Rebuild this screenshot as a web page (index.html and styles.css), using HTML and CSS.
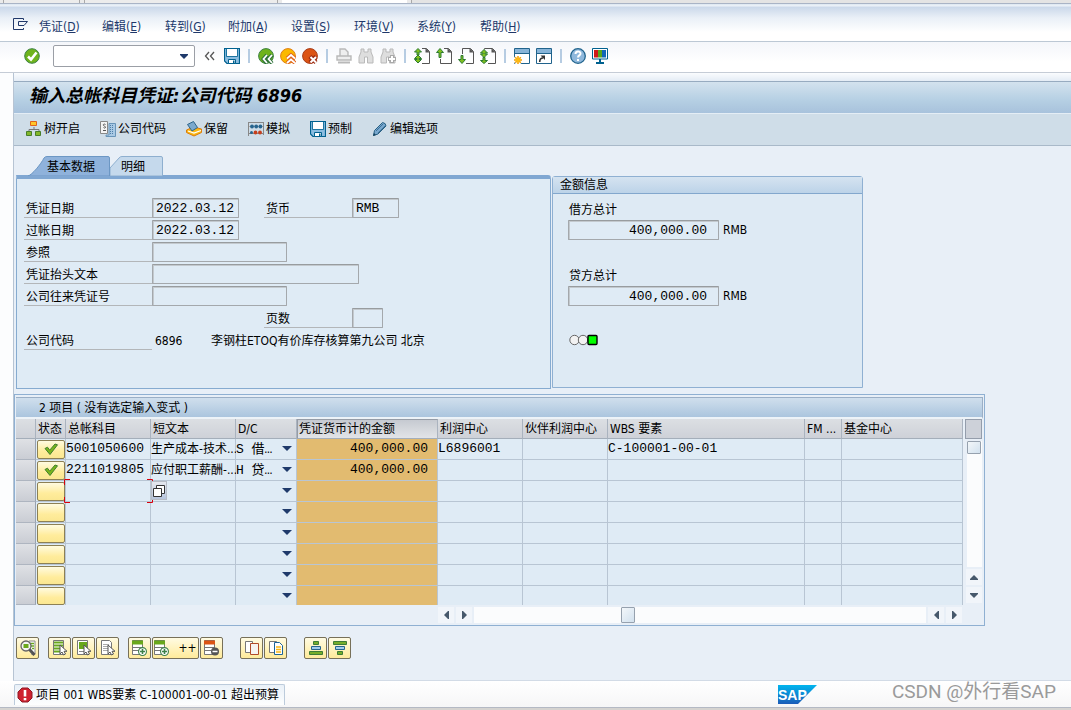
FILE: index.html
```html
<!DOCTYPE html>
<html lang="zh-CN">
<head>
<meta charset="utf-8">
<title>输入总帐科目凭证</title>
<link rel="stylesheet" href="styles.css">
</head>
<body>
<svg class="defs" width="0" height="0" aria-hidden="true">
  <defs>
    <symbol id="save" viewBox="0 0 16 16"><path d="M.5.500h15v15H3L.5 13z" fill="#8bbde0" stroke="#00618f" stroke-width="1.200"/><path d="M3 1h10v7H3z" fill="#fff"/><path d="M2.500 1v7.500h11V1" fill="none" stroke="#00618f" stroke-width=".8"/><path d="M4.500 11.500h7v4h-7z" fill="#fff" stroke="#00618f"/><path d="M9 12.500h1.500V15H9z" fill="#00618f"/></symbol>
    <symbol id="tick" viewBox="0 0 16 16"><path d="M2 7.500l2.500-1.300 2.200 3L12 3l2.500.8L7 13.500z" fill="#79b51c" stroke="#3f7f2d"/></symbol>
    <symbol id="cursor" viewBox="0 0 9 12"><path d="M1 1v9l2-2 1.500 3 2-1-1.500-2.700H8z" fill="#fff" stroke="#555"/></symbol>
    <symbol id="plus" viewBox="0 0 8 8"><circle cx="4" cy="4" r="3.500" fill="#fff" stroke="#3c8048"/><path d="M4 1.800v4.400M1.800 4h4.400" stroke="#3c8048" stroke-width="1.400"/></symbol>
  </defs>
</svg>
<div class="window">
  <div class="browser-tabs"><span class="btab btab-a"></span><span class="btab btab-b"></span><span class="btab btab-c"></span><span class="btab btab-d"></span></div>
  <nav class="menubar">
    <button class="menu-icon" aria-label="菜单"><svg width="16" height="12" viewBox="0 0 16 12"><path d="M10.500 2V.5H.5v11h10V10M5.500 3.500h9L11 7.500H5.500z" fill="none" stroke="#20386a"/></svg></button>
    <button class="menu">凭证(<u>D</u>)</button><button class="menu">编辑(<u>E</u>)</button><button class="menu">转到(<u>G</u>)</button><button class="menu">附加(<u>A</u>)</button><button class="menu">设置(<u>S</u>)</button><button class="menu">环境(<u>V</u>)</button><button class="menu">系统(<u>Y</u>)</button><button class="menu">帮助(<u>H</u>)</button>
  </nav>
  <div class="toolbar">
    <button class="icon enter" aria-label="回车"><svg viewBox="0 0 16 16"><circle cx="8" cy="8" r="7.300" fill="#6fb31c" stroke="#3c8244"/><path d="M4 8.500l3 3 5.500-7" fill="none" stroke="#fff" stroke-width="2.600"/></svg></button>
    <div class="command"><input aria-label="命令"><button aria-label="历史记录"><svg width="8" height="5" viewBox="0 0 8 5"><path d="M0 0h8v1L4 5 0 1z" fill="#1f3a6b"/></svg></button></div>
    <button class="icon" aria-label="折叠"><svg viewBox="0 0 16 16"><path d="M7 4L3.500 8 7 12M12 4L8.500 8l3.500 4" fill="none" stroke="#555" stroke-width="1.300"/></svg></button>
    <button class="icon" aria-label="保存"><svg><use href="#save"/></svg></button>
    <span class="sep"></span>
    <button class="icon" aria-label="返回"><svg viewBox="0 0 16 16"><circle cx="8" cy="8" r="7.400" fill="#6fb31c" stroke="#3c8244"/><path d="M9 7l-3.500 4L9 15.500M14 7l-3.500 4 3.500 4.500" fill="none" stroke="#2d7138" stroke-width="3.800"/><path d="M9 7l-3.500 4L9 15M14 7l-3.500 4 3.500 4" fill="none" stroke="#fff" stroke-width="1.800"/></svg></button>
    <button class="icon" aria-label="退出"><svg viewBox="0 0 16 16"><circle cx="8" cy="8" r="7.400" fill="#fbb900" stroke="#e07e14"/><path d="M7 10.500L11 7l4 3.500M7 15l4-3.500 4 3.500" fill="none" stroke="#e0641c" stroke-width="3.800"/><path d="M7 10.500L11 7l4 3.500M7 15l4-3.500 4 3.500" fill="none" stroke="#fff" stroke-width="1.700"/></svg></button>
    <button class="icon" aria-label="取消"><svg viewBox="0 0 16 16"><circle cx="8" cy="8" r="7.400" fill="#dc5414" stroke="#a83c18"/><path d="M8 8.500l6 6M14 8.500l-6 6" stroke="#9b2b12" stroke-width="4.200"/><path d="M8.500 9l5.500 5.500M14 9l-5.500 5.500" stroke="#fff" stroke-width="2"/></svg></button>
    <span class="sep"></span>
    <button class="icon" aria-label="打印"><svg viewBox="0 0 16 16"><path d="M4 8V1h5l3 3v4M1 8h14v4H1z" fill="#eee" stroke="#b9b9b9" stroke-width="1.400"/><path d="M2 14.500h12" stroke="#b9b9b9" stroke-width="2"/></svg></button>
    <button class="icon" aria-label="查找"><svg viewBox="0 0 16 16"><path d="M3 1h3v3h4V1h3v3l2 5v6H9.500V9h-3v6H1V9l2-5z" fill="#dedede" stroke="#b9b9b9"/></svg></button>
    <button class="icon" aria-label="查找下一个"><svg viewBox="0 0 16 16"><path d="M3 1h3v3h4V1h3v3l2 5v6H9.500V9h-3v6H1V9l2-5z" fill="#dedede" stroke="#b9b9b9"/><path d="M12 7v8M8 11h8" stroke="#aaa" stroke-width="4"/><path d="M12 8v6M9 11h6" stroke="#fff" stroke-width="2"/></svg></button>
    <span class="sep"></span>
    <button class="icon" aria-label="首页"><svg viewBox="0 0 16 16"><path d="M8 .5h4.500l3 3v12H8" fill="none" stroke="#555"/><path d="M11.500 0L16 4.500h-4.500z" fill="#555"/><path d="M4 .5L7.500 4H5v3H3V4H.5zM4 7l3.500 3.500H5v1h2.500L4 15 .5 11.500H3v-1H.5z" fill="#7fc01e" stroke="#2c7a33"/></svg></button>
    <button class="icon" aria-label="上一页"><svg viewBox="0 0 16 16"><path d="M8 .5h4.500l3 3v12h-11V11" fill="none" stroke="#555"/><path d="M11.500 0L16 4.500h-4.500z" fill="#555"/><path d="M4 .5L7.500 4.500H5v5H3v-5H.5z" fill="#7fc01e" stroke="#2c7a33"/></svg></button>
    <button class="icon" aria-label="下一页"><svg viewBox="0 0 16 16"><path d="M4.500 6V.5h8l3 3v12H8" fill="none" stroke="#555"/><path d="M11.500 0L16 4.500h-4.500z" fill="#555"/><path d="M4 15.500L.5 11.500H3v-4h2v4h2.500z" fill="#7fc01e" stroke="#2c7a33"/></svg></button>
    <button class="icon" aria-label="末页"><svg viewBox="0 0 16 16"><path d="M4.500 1.500v-1h8l3 3v12H8" fill="none" stroke="#555"/><path d="M11.500 0L16 4.500h-4.500z" fill="#555"/><path d="M4 1.500L7.500 5H5v1h2.500L4 9.500.5 6H3V5H.5zM4 15.500L.5 12.500H3v-3h2v3h2.500z" fill="#7fc01e" stroke="#2c7a33"/></svg></button>
    <span class="sep"></span>
    <button class="icon" aria-label="新建会话"><svg viewBox="0 0 16 16"><path d="M.5.500h15v15H.5z" fill="#fff" stroke="#20638c"/><path d="M1 1h14v4H1z" fill="#87b4d8"/><path d="M1 5.500h14" stroke="#20638c"/><circle cx="4" cy="12" r="4.500" fill="#fff"/><path d="M4 8v8M0 12h8M1.200 9.200l5.600 5.600M6.800 9.200l-5.600 5.600" stroke="#f5a000" stroke-width="1.500"/><circle cx="4" cy="12" r="2.300" fill="#fdbb13"/></svg></button>
    <button class="icon" aria-label="快捷方式"><svg viewBox="0 0 16 16"><path d="M.5.500h15v15H.5z" fill="#fff" stroke="#20638c"/><path d="M1 1h14v4H1z" fill="#87b4d8"/><path d="M1 5.500h14" stroke="#20638c"/><path d="M3.700 14c0-3 1-4 3.300-4" fill="none" stroke="#333" stroke-width="1.600"/><path d="M4.500 7.500H9V12z" fill="#333"/></svg></button>
    <span class="sep"></span>
    <button class="icon" aria-label="帮助"><svg viewBox="0 0 16 16"><circle cx="8" cy="8" r="7.300" fill="#8fb8dc" stroke="#20638c" stroke-width="1.300"/><path d="M5.500 6c0-3.300 5-3.300 5-.5 0 2-2.500 1.800-2.500 4" fill="none" stroke="#fff" stroke-width="2"/><path d="M7 11h2v2H7z" fill="#fff"/></svg></button>
    <button class="icon" aria-label="布局"><svg viewBox="0 0 16 16"><path d="M.5.500h15v10.500H.5z" fill="#fff" stroke="#00618f"/><path d="M2 2h4v7.500H2z" fill="#d01818"/><path d="M6 2h4v7.500H6z" fill="#59a51c"/><path d="M10 2h4v7.500h-4z" fill="#1266b8"/><path d="M8 11v3M4 15h8" stroke="#00618f" stroke-width="2"/></svg></button>
  </div>

  <main class="main">
    <h1 class="title">输入总帐科目凭证:公司代码 6896</h1>
    <div class="app-toolbar">
      <button><svg class="i" viewBox="0 0 16 16"><path d="M8 6v3M3 11V8.500h10V11" fill="none" stroke="#777"/><path d="M4.500.500h6v4h-6z" fill="#ffc629" stroke="#e0641c"/><path d="M.5 10.500h5v4h-5zM9.500 10.500h5v4h-5z" fill="#83b72a" stroke="#477e2a"/></svg>树开启</button>
      <button><svg class="i" viewBox="0 0 16 16"><path d="M.5.500h7v12h-7z" fill="#f4f4f4" stroke="#888"/><path d="M5.500 3.500c-1-1-3 0-2 1s2.500 1 2 2-1.500.5-2 0M3 9.500h3" fill="none" stroke="#555"/><path d="M9 2.500h6.500v13H6V14h3z" fill="#a9c9e4" stroke="#6894b8"/><path d="M10.500 4v10M12.500 4v10" stroke="#4d7ea8" stroke-dasharray="1 1"/></svg>公司代码</button>
      <button><svg class="i" viewBox="0 0 16 16"><path d="M.5 9l7-3 8 2v3.500L8 15l-7.500-3.500z" fill="#fbb913" stroke="#db7a0c"/><path d="M2 10l6 2 7-2.500" fill="none" stroke="#fff" stroke-width="1.200"/><path d="M1.500 3.500L7.500.500l4 6L6 10z" fill="#7ba9cd" stroke="#2d648b"/></svg>保留</button>
      <button><svg class="i" viewBox="0 0 16 16"><path d="M.5 15V1M15.500 1v13M0 1.500h16M1 12.500h14" fill="none" stroke="#888"/><path d="M1 5.500h14" stroke="#aaa"/><g fill="#27658f"><circle cx="4" cy="5.500" r="1.900"/><circle cx="8.200" cy="5.500" r="1.900"/><circle cx="12.400" cy="5.500" r="1.900"/></g><g fill="#c63f1d"><circle cx="7.500" cy="11.500" r="1.900"/><circle cx="12" cy="11.500" r="1.900"/></g><circle cx="3.500" cy="11.500" r="1.500" fill="#27658f"/></svg>模拟</button>
      <button><svg class="i"><use href="#save"/></svg>预制</button>
      <button><svg class="i" viewBox="0 0 16 16"><path d="M1.500 14.500l1-5 8-8q3.500.5 3.500 3.500l-8 8z" fill="#78a7ce" stroke="#286083"/><path d="M4 10L11 3M6 12l7-7" stroke="#3c7198"/><path d="M1 15l1-3 2 2z" fill="#16435e"/></svg>编辑选项</button>
    </div>

    <div class="content">
      <div class="panels">
        <section class="basic">
          <div class="tabs" role="tablist">
            <button role="tab" aria-selected="true" class="tab tab-on"><svg viewBox="0 0 82 20" preserveAspectRatio="none"><path d="M0 20C4 19 13 8 16 2q1-1.500 3-1.500h61q1.500 0 1.500 1.500v18z" fill="#8fb2db" stroke="#6c97c4"/></svg><span>基本数据</span></button>
            <button role="tab" aria-selected="false" class="tab tab-off"><svg viewBox="0 0 53 20" preserveAspectRatio="none"><path d="M0 20v-8L9 2q1-1.500 3-1.500h39q1.500 0 1.500 1.500v18z" fill="#c5d9ec" stroke="#8eafcf"/></svg><span>明细</span></button>
          </div>
          <div class="form">
            <label class="c1" for="d1">凭证日期</label><input class="c2 w-date" id="d1" value="2022.03.12"><label class="c4" for="cur">货币</label><input class="c5 w-cur" id="cur" value="RMB">
            <label class="c1" for="d2">过帐日期</label><input class="c2 w-date" id="d2" value="2022.03.12">
            <label class="c1" for="ref">参照</label><input class="c2 w-ref" id="ref">
            <label class="c1" for="txt">凭证抬头文本</label><input class="c2 w-text" id="txt">
            <label class="c1" for="ico">公司往来凭证号</label><input class="c2 w-ref" id="ico">
            <label class="c4 r6" for="pages">页数</label><input class="c5 r6 w-page" id="pages">
            <span class="c1 r7 lbl">公司代码</span><output class="c2 r7 out">6896</output><output class="c3 r7 out">李钢柱ETOQ有价库存核算第九公司 北京</output>
          </div>
        </section>
        <section class="amounts">
          <h2>金额信息</h2>
          <div class="amount-body">
            <label for="dr">借方总计</label>
            <div class="amount"><input id="dr" value="400,000.00" readonly><span>RMB</span></div>
            <label for="cr">贷方总计</label>
            <div class="amount"><input id="cr" value="400,000.00" readonly><span>RMB</span></div>
            <svg class="lights" width="29" height="12" viewBox="0 0 29 12"><circle cx="5.500" cy="6" r="4.700" fill="#f2f2f2" stroke="#666"/><circle cx="14" cy="6" r="4.700" fill="#f2f2f2" stroke="#666"/><rect x="19" y="1.500" width="9" height="9" rx="1" fill="#0f0" stroke="#000" stroke-width="1.400"/></svg>
          </div>
        </section>
      </div>

      <section class="items">
        <h2>2 项目 ( 没有选定输入变式 )</h2>
        <div class="grid-area">
          <div class="grid-box">
          <table class="grid">
            <colgroup><col class="k-sel"><col class="k-st"><col class="k-a"><col class="k-a"><col class="k-dc"><col class="k-amt"><col class="k-a"><col class="k-a"><col class="k-wbs"><col class="k-fm"><col class="k-fund"></colgroup>
            <thead><tr><th></th><th>状态</th><th>总帐科目</th><th>短文本</th><th>D/C</th><th class="sorted">凭证货币计的金额</th><th>利润中心</th><th>伙伴利润中心</th><th>WBS 要素</th><th>FM ...</th><th>基金中心</th></tr></thead>
            <tbody>
              <tr><td class="sel"></td><td class="st"><button aria-label="正常"><svg width="18" height="16"><use href="#tick"/></svg></button></td><td class="m">5001050600</td><td class="short">生产成本-技术...</td><td class="dc"><select aria-label="借贷"><option>S 借…</option></select></td><td class="amt">400,000.00</td><td class="m">L6896001</td><td></td><td class="m">C-100001-00-01</td><td></td><td></td></tr>
              <tr><td class="sel"></td><td class="st"><button aria-label="正常"><svg width="18" height="16"><use href="#tick"/></svg></button></td><td class="m">2211019805</td><td class="short">应付职工薪酬-...</td><td class="dc"><select aria-label="借贷"><option>H 贷…</option></select></td><td class="amt">400,000.00</td><td></td><td></td><td></td><td></td><td></td></tr>
              <tr><td class="sel"></td><td class="st"><button aria-label="状态"></button></td><td class="focus"><svg class="corners" width="89" height="24" viewBox="0 0 89 24"><path d="M6 .5H.5V6M83 .5h5.500V6M6 23.500H.5V18M83 23.500h5.500V18" fill="none" stroke="#d8000c"/></svg><button class="f4" aria-label="搜索帮助"><svg width="12" height="12" viewBox="0 0 12 12"><path d="M3.500 3V.5h8v8H9" fill="#fff" stroke="#333"/><path d="M.5 3.500h8v8h-8z" fill="#fff" stroke="#333"/></svg></button></td><td></td><td class="dc"><select aria-label="借贷"><option></option></select></td><td class="amt"></td><td></td><td></td><td></td><td></td><td></td></tr>
              <tr><td class="sel"></td><td class="st"><button aria-label="状态"></button></td><td></td><td></td><td class="dc"><select aria-label="借贷"><option></option></select></td><td class="amt"></td><td></td><td></td><td></td><td></td><td></td></tr>
              <tr><td class="sel"></td><td class="st"><button aria-label="状态"></button></td><td></td><td></td><td class="dc"><select aria-label="借贷"><option></option></select></td><td class="amt"></td><td></td><td></td><td></td><td></td><td></td></tr>
              <tr><td class="sel"></td><td class="st"><button aria-label="状态"></button></td><td></td><td></td><td class="dc"><select aria-label="借贷"><option></option></select></td><td class="amt"></td><td></td><td></td><td></td><td></td><td></td></tr>
              <tr><td class="sel"></td><td class="st"><button aria-label="状态"></button></td><td></td><td></td><td class="dc"><select aria-label="借贷"><option></option></select></td><td class="amt"></td><td></td><td></td><td></td><td></td><td></td></tr>
              <tr class="last"><td class="sel"></td><td class="st"><button aria-label="状态"></button></td><td></td><td></td><td class="dc"><select aria-label="借贷"><option></option></select></td><td class="amt"></td><td></td><td></td><td></td><td></td><td></td></tr>
            </tbody>
          </table>
          </div>
          <div class="vscroll">
            <button class="config" aria-label="配置"></button>
            <div class="vtrack"><div class="thumb"></div></div>
            <button class="arrow" aria-label="上"><svg width="8" height="5" viewBox="0 0 8 5"><path d="M0 5V4l4-4 4 4v1z"/></svg></button>
            <button class="arrow" aria-label="下"><svg width="8" height="5" viewBox="0 0 8 5"><path d="M0 0v1l4 4 4-4V0z"/></svg></button>
          </div>
        </div>
        <div class="hscroll">
          <button class="arrow" aria-label="左"><svg width="5" height="8" viewBox="0 0 5 8"><path d="M5 0H4L0 4l4 4h1z"/></svg></button>
          <button class="arrow" aria-label="右"><svg width="5" height="8" viewBox="0 0 5 8"><path d="M0 0h1l4 4-4 4H0z"/></svg></button>
          <div class="htrack"><div class="thumb"></div></div>
          <button class="arrow" aria-label="左"><svg width="5" height="8" viewBox="0 0 5 8"><path d="M5 0H4L0 4l4 4h1z"/></svg></button>
          <button class="arrow" aria-label="右"><svg width="5" height="8" viewBox="0 0 5 8"><path d="M0 0h1l4 4-4 4H0z"/></svg></button>
        </div>
      </section>

      <div class="actions">
        <div class="group"><button aria-label="明细"><svg viewBox="0 0 16 16"><path d="M9 1h6v13h-4" fill="#fff" stroke="#888"/><path d="M9 3.500h5M11 6h3M12 8.500h2" stroke="#69a81c" stroke-width="1.500"/><circle cx="6" cy="6" r="5" fill="#f4f4f4" stroke="#666" stroke-width="1.300"/><path d="M3.500 4h5v4h-5z" fill="#69a81c"/><path d="M9.500 9.500l5 5.500" stroke="#555" stroke-width="3"/></svg></button></div>
        <div class="group"><button aria-label="全选"><svg viewBox="0 0 16 16"><path d="M1.500.500h10v14h-10z" fill="#fff" stroke="#777"/><path d="M2 2.500h9M2 5.500h9M2 8.500h6M2 11.500h6" stroke="#69a81c" stroke-width="2"/><use href="#cursor" x="7" y="4" width="9" height="12"/></svg></button><button aria-label="选择块"><svg viewBox="0 0 16 16"><path d="M1.500.500h10v14h-10z" fill="#fff" stroke="#777"/><path d="M3 2h8v7H3z" fill="#69a81c"/><path d="M3 11.500h6" stroke="#888"/><use href="#cursor" x="7" y="4" width="9" height="12"/></svg></button><button aria-label="取消全选"><svg viewBox="0 0 16 16"><path d="M1.500.500h8l2 2v12h-10z" fill="#fff" stroke="#777"/><path d="M3 4.500h6M3 6.500h6M3 8.500h5M3 10.500h5" stroke="#aaa"/><use href="#cursor" x="7" y="4" width="9" height="12"/></svg></button></div>
        <div class="group wide"><button aria-label="插入行"><svg viewBox="0 0 16 16"><path d="M.5.500h10v14H.5z" fill="#fff" stroke="#777"/><path d="M0 2.500h11" stroke="#69a81c" stroke-width="4"/><path d="M1 7.500h10M1 10.500h6" stroke="#777"/><use href="#plus" x="6" y="7" width="9" height="9"/></svg></button><button class="double" aria-label="插入多行"><svg viewBox="0 0 16 16"><path d="M.5.500h10v14H.5z" fill="#fff" stroke="#777"/><path d="M0 2.500h11" stroke="#69a81c" stroke-width="4"/><path d="M1 7.500h10M1 10.500h6" stroke="#777"/><use href="#plus" x="6" y="7" width="9" height="9"/></svg><span>++</span></button><button aria-label="删除行"><svg viewBox="0 0 16 16"><path d="M.5.500h10v14H.5z" fill="#fff" stroke="#777"/><path d="M0 2.500h11" stroke="#dc5414" stroke-width="4"/><path d="M1 7.500h10M1 10.500h6" stroke="#777"/><circle cx="11" cy="11.500" r="4" fill="#555"/><path d="M8.500 11.500h5" stroke="#fff" stroke-width="1.500"/></svg></button></div>
        <div class="group wide"><button aria-label="复制"><svg viewBox="0 0 16 16"><path d="M1.500 1.500h7v11h-7z" fill="#fff" stroke="#777"/><path d="M6.500 3.500h8v11h-8z" fill="#f6f3f0" stroke="#b14a28"/></svg></button><button aria-label="粘贴"><svg viewBox="0 0 16 16"><path d="M1.500 1.500h7v11h-7z" fill="#fff" stroke="#777"/><path d="M6.500 2.500h5l3 3v9h-8z" fill="#fff" stroke="#1c6498"/><path d="M8 7h5M8 9.500h5M8 12h5" stroke="#fbb913" stroke-width="1.500"/></svg></button></div>
        <div class="group"><button aria-label="升序"><svg viewBox="0 0 16 16"><path d="M5.500 1.500h5v3h-5zM1.500 11.500h13v3h-13z" fill="#75ad29" stroke="#3d7c37"/><path d="M3.500 6.500h9v3h-9z" fill="#a2cbed" stroke="#27658f"/></svg></button><button aria-label="降序"><svg viewBox="0 0 16 16"><path d="M1.500 1.500h13v3h-13zM5.500 11.500h5v3h-5z" fill="#75ad29" stroke="#3d7c37"/><path d="M3.500 6.500h9v3h-9z" fill="#a2cbed" stroke="#27658f"/></svg></button></div>
      </div>
    </div>
  </main>

  <footer class="status">
    <div class="message" role="status"><svg class="i" viewBox="0 0 16 16"><path d="M5 1h6l4 4v6l-4 4H5l-4-4V5z" fill="#cf2230" stroke="#8e1b27"/><path d="M8 3v6.500" stroke="#fff" stroke-width="2.600"/><path d="M6.700 11h2.600v2.300H6.700z" fill="#fff"/></svg><span>项目 001 WBS要素 C-100001-00-01 超出预算</span></div>
    <svg class="sap" width="39" height="19" viewBox="0 0 39 19"><defs><linearGradient id="sg" x2="0" y2="1"><stop stop-color="#00b5ee"/><stop offset="1" stop-color="#1c5cb8"/></linearGradient></defs><path d="M0 0h39L20 19H0z" fill="url(#sg)"/><text x="0" y="15" class="sap-text">SAP</text></svg>
    <div class="watermark">CSDN @外行看SAP</div>
  </footer>
</div>
</body>
</html>
```
FILE: styles.css
```css
* { box-sizing: border-box; }
body {
  margin: 0;
  background: #d9d9dc;
  color: #000;
  font: 12px/16px "DejaVu Sans Condensed", "Noto Sans CJK SC", sans-serif;
}
button, input, select { font: inherit; color: inherit; margin: 0; padding: 0; }
button { border: 0; background: none; }
h1, h2 { margin: 0; font-weight: normal; }
.defs { position: absolute; }
.window { min-height: 100vh; display: flex; flex-direction: column; background: #fcfdfe; border-bottom: 2px solid #d5d3d0; }

.browser-tabs { display: flex; gap: 4px; height: 4px; background: #eaeaea; border-bottom: 1px solid #a9b4c6; padding-left: 3px; }
.btab { border: solid #a9a9a9; border-width: 0 1px; background: #ececec; }
.btab-a { width: 77px; }
.btab-b { width: 194px; }
.btab-c { width: 125px; border: 0; background: #fff; }
.btab-d { flex: 1; background: #e4e4e4; border-right: 0; }

.menubar {
  display: flex; align-items: center; height: 38px; padding: 8px 0 0 13px;
  background: linear-gradient(#dce7f2 0, #eef3f9 2px, #cad8ea 3px, #eaf0f7 14px, #fff 28px);
  border-bottom: 1px solid #bcc8d4; color: #20386a;
}
.menu-icon { width: 26px; height: 18px; text-align: left; display: flex; }
.menu { width: 63px; text-align: left; white-space: nowrap; }

.toolbar {
  display: flex; align-items: center; gap: 6px; height: 31px; padding: 0 0 2px 24px;
  background: linear-gradient(#f4f6fa, #fff 20px); border-bottom: 1px solid #c5ccd6;
}
.icon, .icon svg, .i { display: block; width: 16px; height: 16px; flex: none; }
.enter { margin-right: 7px; }
.command { display: flex; width: 142px; height: 22px; border: 1px solid #9b9fa6; border-radius: 2px; background: #fff; margin-right: 1px; }
.command input { flex: 1; min-width: 0; border: 0; background: none; }
.command button { width: 21px; display: flex; align-items: center; justify-content: center; }
.sep { width: 6px; height: 14px; background: linear-gradient(#b6cce2, #b6cce2) center / 2px 100% no-repeat; }

.main {
  flex: 1; margin-left: 13px; padding-top: 8px;
  background: linear-gradient(#fafcfe, #e4ecf5 8px, #e8eff7 9px);
  border-left: 1px solid #b7c4d3; border-bottom: 1px solid #d2dbe6;
}
.title {
  height: 32px; padding-left: 15px; border-top: 1px solid #97abc0;
  background: linear-gradient(#d3e2ee, #b5cfe3 60%, #a8c2dc);
  font-size: 18px; line-height: 27px; font-weight: bold; font-style: italic; white-space: nowrap;
}
.app-toolbar { display: flex; gap: 20px; height: 33px; padding: 0 12px 1px; background: #cfdde8; border-top: 1px solid #e4edf5; border-bottom: 1px solid #a9b9c9; }
.app-toolbar button { display: flex; align-items: center; gap: 2px; white-space: nowrap; }
.content { padding: 10px 0 0; }

.panels { display: flex; align-items: flex-end; gap: 1px; padding-left: 2px; }
.basic { flex: 0 1 535px; }
.tabs { display: flex; padding-left: 12px; height: 19px; }
.tab { position: relative; height: 20px; text-align: left; }
.tab svg { position: absolute; inset: 0; width: 100%; height: 100%; }
.tab span { position: relative; }
.tab-on { width: 82px; padding: 2px 0 0 19px; }
.tab-off { width: 53px; padding: 2px 0 0 11px; }
.form {
  display: grid; grid-template-columns: 128px 56px 56px 88px 1fr; grid-auto-rows: 22px; align-items: start;
  height: 214px; padding: 19px 7px 0; background: #dfebf5; border: 1px solid #86abd0; border-top: 4px solid #80a7d2; border-top-right-radius: 3px;
}
.form label, .lbl { height: 20px; line-height: 22px; padding-left: 2px; border-bottom: 1px solid #b3b6b9; }
.form > * { white-space: nowrap; }
.c1 { grid-column: 1; }
.c2 { grid-column: 2; }
.c3 { grid-column: 3; }
.c4 { grid-column: 4; }
.c5 { grid-column: 5; }
.r6 { grid-row: 6; }
.r7 { grid-row: 7; }
.out { line-height: 22px; padding-left: 3px; }
.form input, .amount input {
  height: 20px; border: 1px solid #a4a8ac; border-top-color: #989c9f; box-shadow: inset 1px 1px #c3c9ce; border-radius: 1px; background: #dfebf5;
  padding: 0 3px; font: 13px/18px "Liberation Mono", "Noto Sans CJK SC", monospace;
}
.w-date { width: 87px; }
.w-cur { width: 47px; }
.w-ref { width: 135px; }
.w-text { width: 207px; }
.w-page { width: 31px; }

.amounts { flex: 0 1 311px; height: 212px; margin-bottom: 1px; background: #deeaf4; border: 1px solid #8fb0d2; border-radius: 3px 3px 0 0; }
.amounts h2 { height: 17px; padding-left: 7px; font-size: 12px; line-height: 17px; background: linear-gradient(#d5e3f0, #bcd3e8); border-bottom: 1px solid #82a7cd; }
.amount-body { display: flex; flex-direction: column; padding: 6px 15px 0; }
.amount-body label { height: 20px; line-height: 20px; padding-left: 1px; }
.amount { display: flex; gap: 4px; height: 20px; margin-bottom: 26px; line-height: 21px; }
.amount input { width: 151px; padding-right: 11px; text-align: right; }
.lights { margin: 2px 0 0 1px; }

.items { max-width: 971px; margin-top: 5px; padding: 2px 1px 0; border: 1px solid #8fb0d2; }
.items h2 { height: 22px; padding-left: 23px; font-size: 12px; line-height: 20px; background: linear-gradient(#d0dfed, #abc5de); border: 1px solid #9bafc6; border-width: 1px 1px 0 0; border-bottom: 2px solid #edf3f8; }
.grid-area { display: flex; }
.grid-box { flex: 1; min-width: 0; }
.grid { width: 100%; table-layout: fixed; border-collapse: separate; border-spacing: 0; }
.k-sel { width: 20px; }
.k-st { width: 30px; }
.k-a { width: 85px; }
.k-dc { width: 61px; }
.k-amt { width: 141px; }
.k-wbs { width: 197px; }
.k-fm { width: 37px; }
.k-fund { width: auto; }
.grid th { height: 20px; padding: 0 0 0 2px; font-weight: normal; text-align: left; line-height: 18px; white-space: nowrap; background: linear-gradient(#dcdfe3, #ced1d8); border-right: 1px solid #aab3bf; border-bottom: 1px solid #a4aeba; }
.grid th.sorted { background: linear-gradient(#c6cad1, #e2e4e7); border-left: 1px solid #969ca6; border-top: 1px solid #969ca6; padding-left: 1px; }
.grid td { position: relative; height: 21px; padding: 0; line-height: 18px; white-space: nowrap; background: #dfebf5; border-right: 1px solid #b8c5d3; border-bottom: 1px solid #b8c5d3; }
.grid .last td { height: 19px; border-bottom: 0; }
.grid td.sel { background: linear-gradient(#dfe1e5, #cacdd4); border-right: 1px solid #98a2b0; border-bottom: 1px solid #aeb5c0; }
.grid td.st { padding: 0 1px; }
.st button { display: flex; align-items: center; justify-content: center; width: 28px; height: 19px; border: 1px solid #8d8054; border-radius: 2px; background: linear-gradient(#fffbe0, #ffec9c 60%, #fbe791); }
.last .st button { height: 18px; }
.grid .m, .amt, .dc select { font: 13px/20px "Liberation Mono", "Noto Sans CJK SC", monospace; }
.grid td.amt { background: #e2bb70; text-align: right; padding-right: 9px; font-size: 13px; }
.grid td.dc::after { content: ""; position: absolute; right: 4px; top: 7px; border: 5px solid transparent; border-top-color: #1f3a6b; border-bottom: 0; }
.dc select { display: block; width: 100%; height: 18px; appearance: none; border: 0; border-radius: 0; background: none; }
.corners { position: absolute; left: -2px; top: -2px; z-index: 1; }
.f4 { position: absolute; left: 85px; top: 0; z-index: 1; width: 16px; height: 19px; display: flex; align-items: center; justify-content: center; background: linear-gradient(#e5e8ee, #b6c4dc); border: 1px solid #b7bcc5; }

.vscroll { flex: none; width: 20px; display: flex; flex-direction: column; align-items: flex-end; gap: 2px; padding: 0 1px 2px 0; }
.config { width: 17px; height: 20px; border: 1px solid #949dab; background: #cdd1d9; }
.vtrack { flex: 1; width: 15px; background: #fbfcfd; }
.vtrack .thumb { width: 14px; height: 13px; }
.thumb { border: 1px solid #96a1ae; border-radius: 1px; background: linear-gradient(135deg, #f3f7fa, #d2e1ee); }
.arrow { width: 16px; height: 16px; flex: none; display: flex; align-items: center; justify-content: center; background: #f1f5fa; fill: #46586b; }
.hscroll { display: flex; gap: 2px; height: 20px; padding: 2px 21px 2px 422px; }
.htrack { flex: 1; background: #fbfcfd; }
.htrack .thumb { width: 14px; height: 16px; margin-left: 32.5%; }

.actions { display: flex; gap: 9px; padding: 11px 2px 20px; }
.group { display: flex; gap: 1px; }
.group.wide { margin-right: 8px; }
.actions button { display: flex; align-items: center; justify-content: center; width: 23px; height: 22px; border: 1px solid #777059; border-radius: 2px; background: linear-gradient(#fffbe3, #ffeb9b); }
.actions button svg { width: 16px; height: 16px; flex: none; }
.actions button.double { width: 47px; gap: 8px; font-size: 12px; }

.status { position: relative; display: flex; height: 27px; padding: 3px 254px 0 14px; background: linear-gradient(#fff, #f6f6f7); border-bottom: 1px solid #b4b9c4; }
.message { display: flex; align-items: center; gap: 3px; height: 21px; padding: 0 5px 0 2px; background: linear-gradient(#eaf1f8, #fdfefe); border: 1px solid #bccbdb; border-bottom: 0; border-radius: 2px 2px 0 0; white-space: nowrap; }
.sap { margin-left: auto; margin-top: 1px; }
.sap-text { font: bold 14px "Liberation Sans", sans-serif; fill: #fff; }
.watermark { position: absolute; right: 15px; top: 0; font: 19px/22px Roboto, "Noto Sans CJK SC", sans-serif; color: #9a9a9a; }
```
